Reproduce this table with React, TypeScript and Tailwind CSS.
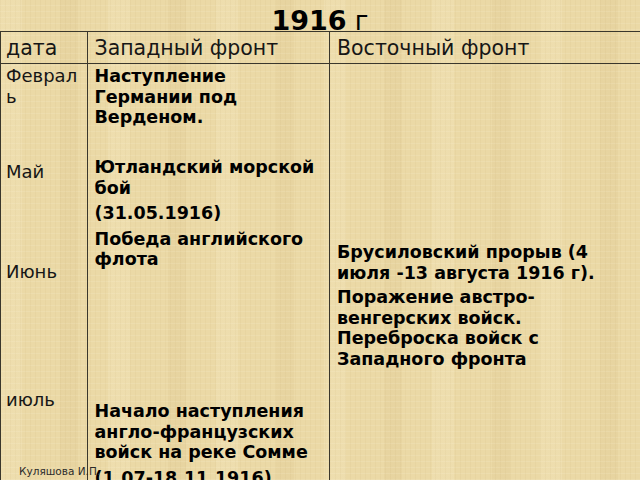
import React from "react";

const line = "border-[#3a372c]";

const paper =
  "bg-[#ebd9a6] bg-[repeating-linear-gradient(90deg,rgba(150,110,40,0.045)_0px,rgba(150,110,40,0.045)_1px,transparent_1px,transparent_5px),repeating-linear-gradient(0deg,rgba(255,250,230,0.12)_0px,rgba(255,250,230,0.12)_1px,transparent_1px,transparent_6px),repeating-linear-gradient(90deg,rgba(255,248,220,0.14)_0px,rgba(255,248,220,0.14)_22px,transparent_22px,transparent_60px,rgba(160,120,50,0.05)_60px,rgba(160,120,50,0.05)_78px,transparent_78px,transparent_108px)]";

export default function App() {
  return (
    <div
      className={`relative w-[640px] h-[480px] overflow-hidden font-['DejaVu_Sans',sans-serif] text-black ${paper}`}
    >
      <div className="h-[31px] pt-[7px] text-center leading-[27px]">
        <span className="text-[27px] font-bold">1916</span>
        <span className="text-[26px]"> г</span>
      </div>

      <div
        className={`grid w-[660px] grid-cols-[87px_242px_331px] border-t-[1.5px] border-l-[1.5px] ${line}`}
      >
        {/* header */}
        <div className={`h-[32px] border-r-[1.5px] border-b-[1.5px] ${line} pl-[5px] pt-[4.5px] text-[20.5px] leading-[22px] text-[#161616]`}>
          дата
        </div>
        <div className={`h-[32px] border-r-[1.5px] border-b-[1.5px] ${line} pl-[6.5px] pt-[4.5px] text-[20.5px] leading-[22px] text-[#161616]`}>
          Западный фронт
        </div>
        <div className={`h-[32px] border-r-[1.5px] border-b-[1.5px] ${line} pl-[7px] pt-[4.5px] text-[20.5px] leading-[22px] text-[#161616]`}>
          Восточный фронт
        </div>

        {/* body */}
        <div className={`h-[440px] border-r-[1.5px] ${line} pl-[5px] pr-[4px] pt-[2px] text-[18px] leading-[20.5px] text-[#161616] break-all`}>
          <p>Февраль</p>
          <p className="mt-[55px]">Май</p>
          <p className="mt-[79.5px]">Июнь</p>
          <p className="mt-[107px]">июль</p>
        </div>
        <div className={`h-[440px] border-r-[1.5px] ${line} pl-[6.5px] pr-[4px] pt-[2px] text-[17.5px] font-bold leading-[20.5px]`}>
          <p>Наступление Германии под Верденом.</p>
          <p className="mt-[29.5px]">Ютландский морской бой</p>
          <p className="mt-[5px]">(31.05.1916)</p>
          <p className="mt-[5px]">Победа английского флота</p>
          <p className="mt-[131.5px]">Начало наступления англо-французских войск на реке Сомме</p>
          <p className="mt-[5px]">(1.07-18.11.1916)</p>
        </div>
        <div className={`h-[440px] border-r-[1.5px] ${line} pl-[7px] pr-[40px] pt-[2px] text-[17.5px] font-bold leading-[20.5px]`}>
          <p className="mt-[176px]">Брусиловский прорыв (4 июля -13 августа 1916 г).</p>
          <p className="mt-[4px]">Поражение австро-венгерских войск. Переброска войск с Западного фронта</p>
        </div>
      </div>

      <div className="absolute left-[19px] top-[465px] text-[10.5px] leading-[13px] text-[#2b2b2b]">
        Куляшова И.П.
      </div>
    </div>
  );
}
